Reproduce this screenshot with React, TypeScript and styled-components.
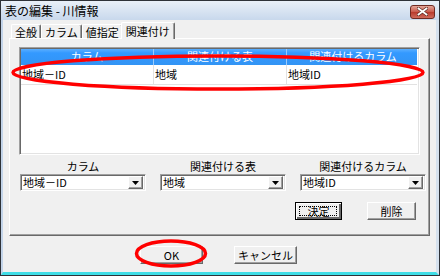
import styled, { createGlobalStyle } from "styled-components";

const GlobalStyle = createGlobalStyle`
  html, body {
    margin: 0;
    padding: 0;
    background: #ffffff;
  }
  body {
    font-family: "Noto Sans CJK JP", "Liberation Sans", sans-serif;
    font-size: 11px;
    color: #000;
  }
  * {
    box-sizing: border-box;
  }
`;

const Window = styled.div`
  position: relative;
  width: 440px;
  height: 276px;
  border: 1px solid #2e3238;
  display: flex;
  flex-direction: column;
  background: #f0f0f0;
`;

const TitleBar = styled.div`
  height: 19px;
  flex: none;
  display: flex;
  align-items: center;
  justify-content: space-between;
  padding: 0 4px 0 4px;
  background: linear-gradient(#e9f0f8, #c8d8ec);
  font-size: 12px;
  line-height: 19px;
`;

const CloseButton = styled.div`
  width: 25px;
  height: 14px;
  margin-top: 2px;
  border: 1px solid #6f2a22;
  border-radius: 3px;
  background: linear-gradient(#e4a699, #c9574a 50%, #b8392c 51%, #cf6a5c);
  display: flex;
  align-items: center;
  justify-content: center;
`;

const Frame = styled.div`
  flex: 1;
  display: flex;
  flex-direction: column;
  border-left: 2px solid #c3d4e9;
  border-right: 3px solid #d5e1ee;
  border-bottom: 3px solid #3fdde6;
`;

const TabRow = styled.div`
  height: 18px;
  flex: none;
  display: flex;
  align-items: flex-end;
  padding-left: 8px;
`;

const Tab = styled.div<{ $active?: boolean }>`
  position: relative;
  height: ${(p) => (p.$active ? "17px" : "14px")};
  padding: 0 ${(p) => (p.$active ? "4px" : "3px")};
  margin: ${(p) => (p.$active ? "0 0 -1px -2px" : "0")};
  z-index: ${(p) => (p.$active ? 1 : 0)};
  background: #f0f0f0;
  border-top: 1px solid #ffffff;
  border-left: 1px solid #ffffff;
  border-right: 1px solid #696969;
  box-shadow: inset -1px 0 #a0a0a0;
  border-radius: 2px 2px 0 0;
  display: flex;
  align-items: center;
  line-height: 12px;
`;

const Panel = styled.div`
  margin: 0 6px;
  height: 198px;
  flex: none;
  border-top: 1px solid #ffffff;
  border-left: 1px solid #ffffff;
  border-right: 1px solid #696969;
  border-bottom: 1px solid #696969;
  box-shadow: inset -1px -1px #a0a0a0;
  padding: 8px 8px 0 9px;
  display: flex;
  flex-direction: column;
`;

const ListView = styled.div`
  width: 401px;
  height: 108px;
  border: 1px solid;
  border-color: #a0a0a0 #ffffff #ffffff #a0a0a0;
  box-shadow: inset 1px 1px #696969, inset -1px -1px #e3e3e3;
  background: #ffffff;
  padding: 1px 2px 1px 1px;
`;

const ListHeader = styled.div`
  display: grid;
  grid-template-columns: 133px 133px 132px;
  height: 16px;
  background: linear-gradient(#5aaeff, #3399ff 25%, #3294f4);
  color: #ffffff;
`;

const HeaderCell = styled.div`
  text-align: center;
  line-height: 15px;
  border-right: 1px solid #9ccbfb;
  &:last-child {
    border-right: none;
  }
`;

const ListRow = styled.div`
  display: grid;
  grid-template-columns: 133px 133px 132px;
  height: 20px;
  border-bottom: 1px solid #e2e2e2;
`;

const RowCell = styled.div`
  line-height: 19px;
  padding-left: 1px;
  border-right: 1px solid #e2e2e2;
  &:last-child {
    border-right: none;
  }
`;

const FieldGrid = styled.div`
  display: grid;
  grid-template-columns: repeat(3, 126px);
  column-gap: 14px;
  row-gap: 2px;
  margin-top: 5px;
  padding-left: 1px;
`;

const FieldLabel = styled.div`
  text-align: center;
  line-height: 12px;
  height: 12px;
`;

const Combo = styled.div`
  height: 17px;
  border: 1px solid;
  border-color: #a0a0a0 #ffffff #ffffff #a0a0a0;
  box-shadow: inset 1px 1px #696969, inset -1px -1px #e3e3e3;
  background: #ffffff;
  display: flex;
  align-items: center;
  justify-content: space-between;
  padding: 1px 2px 1px 2px;
`;

const ComboText = styled.span`
  line-height: 13px;
`;

const ComboArrow = styled.div`
  width: 15px;
  height: 13px;
  background: #f0f0f0;
  border: 1px solid;
  border-color: #ffffff #696969 #696969 #ffffff;
  box-shadow: inset -1px -1px #a0a0a0;
  display: flex;
  align-items: center;
  justify-content: center;
`;

const ButtonRow = styled.div`
  display: flex;
  justify-content: flex-end;
  gap: 25px;
  margin-top: 11px;
  padding-right: 5px;
`;

const Button = styled.div<{ $width: number; $focused?: boolean }>`
  position: relative;
  width: ${(p) => p.$width}px;
  height: 18px;
  background: #f0f0f0;
  border: 1px solid;
  border-color: ${(p) =>
    p.$focused ? "#000000" : "#ffffff #696969 #696969 #ffffff"};
  box-shadow: ${(p) =>
    p.$focused
      ? "inset 1px 1px #ffffff, inset -2px -2px #696969"
      : "inset -1px -1px #a0a0a0"};
  display: flex;
  align-items: center;
  justify-content: center;
  line-height: 12px;
  &::after {
    content: "";
    display: ${(p) => (p.$focused ? "block" : "none")};
    position: absolute;
    inset: 3px 4px 3px 3px;
    border: 1px dotted #000000;
  }
`;

const Footer = styled.div`
  display: flex;
  justify-content: center;
  gap: 31px;
  padding-top: 10px;
  padding-right: 2px;
`;

const Overlay = styled.svg`
  position: absolute;
  left: -1px;
  top: -1px;
  pointer-events: none;
`;

function DownArrow(): JSX.Element {
  return (
    <svg width="7" height="4" viewBox="0 0 7 4">
      <path d="M0 0h7L3.5 4z" fill="#000" />
    </svg>
  );
}

interface ComboField {
  label: string;
  value: string;
}

const fields: ComboField[] = [
  { label: "カラム", value: "地域－ID" },
  { label: "関連付ける表", value: "地域" },
  { label: "関連付けるカラム", value: "地域ID" },
];

const tabs = ["全般", "カラム", "値指定", "関連付け"];

export default function App(): JSX.Element {
  return (
    <>
      <GlobalStyle />
      <Window>
        <TitleBar>
          <span>表の編集 - 川情報</span>
          <CloseButton>
            <svg width="11" height="9" viewBox="0 0 11 9">
              <path
                d="M1.5 1.5l8 6M9.5 1.5l-8 6"
                stroke="#5a2a24"
                strokeWidth="3.2"
                strokeLinecap="square"
              />
              <path
                d="M1.5 1.5l8 6M9.5 1.5l-8 6"
                stroke="#ffffff"
                strokeWidth="1.8"
                strokeLinecap="square"
              />
            </svg>
          </CloseButton>
        </TitleBar>
        <Frame>
          <TabRow>
            {tabs.map((t, i) => (
              <Tab key={t} $active={i === tabs.length - 1}>
                {t}
              </Tab>
            ))}
          </TabRow>
          <Panel>
            <ListView>
              <ListHeader>
                <HeaderCell>カラム</HeaderCell>
                <HeaderCell>関連付ける表</HeaderCell>
                <HeaderCell>関連付けるカラム</HeaderCell>
              </ListHeader>
              <ListRow>
                <RowCell>地域－ID</RowCell>
                <RowCell>地域</RowCell>
                <RowCell>地域ID</RowCell>
              </ListRow>
            </ListView>
            <FieldGrid>
              {fields.map((f) => (
                <FieldLabel key={f.label}>{f.label}</FieldLabel>
              ))}
              {fields.map((f) => (
                <Combo key={f.label}>
                  <ComboText>{f.value}</ComboText>
                  <ComboArrow>
                    <DownArrow />
                  </ComboArrow>
                </Combo>
              ))}
            </FieldGrid>
            <ButtonRow>
              <Button $width={47} $focused>
                決定
              </Button>
              <Button $width={49}>削除</Button>
            </ButtonRow>
          </Panel>
          <Footer>
            <Button $width={63}>OK</Button>
            <Button $width={63}>キャンセル</Button>
          </Footer>
        </Frame>
        <Overlay width="440" height="276" viewBox="0 0 440 276">
          <ellipse
            cx="218"
            cy="72.5"
            rx="205"
            ry="16.5"
            fill="none"
            stroke="#ff0000"
            strokeWidth="3.5"
          />
          <ellipse
            cx="171"
            cy="253.5"
            rx="34.5"
            ry="12.5"
            fill="none"
            stroke="#ff0000"
            strokeWidth="3.5"
          />
        </Overlay>
      </Window>
    </>
  );
}
